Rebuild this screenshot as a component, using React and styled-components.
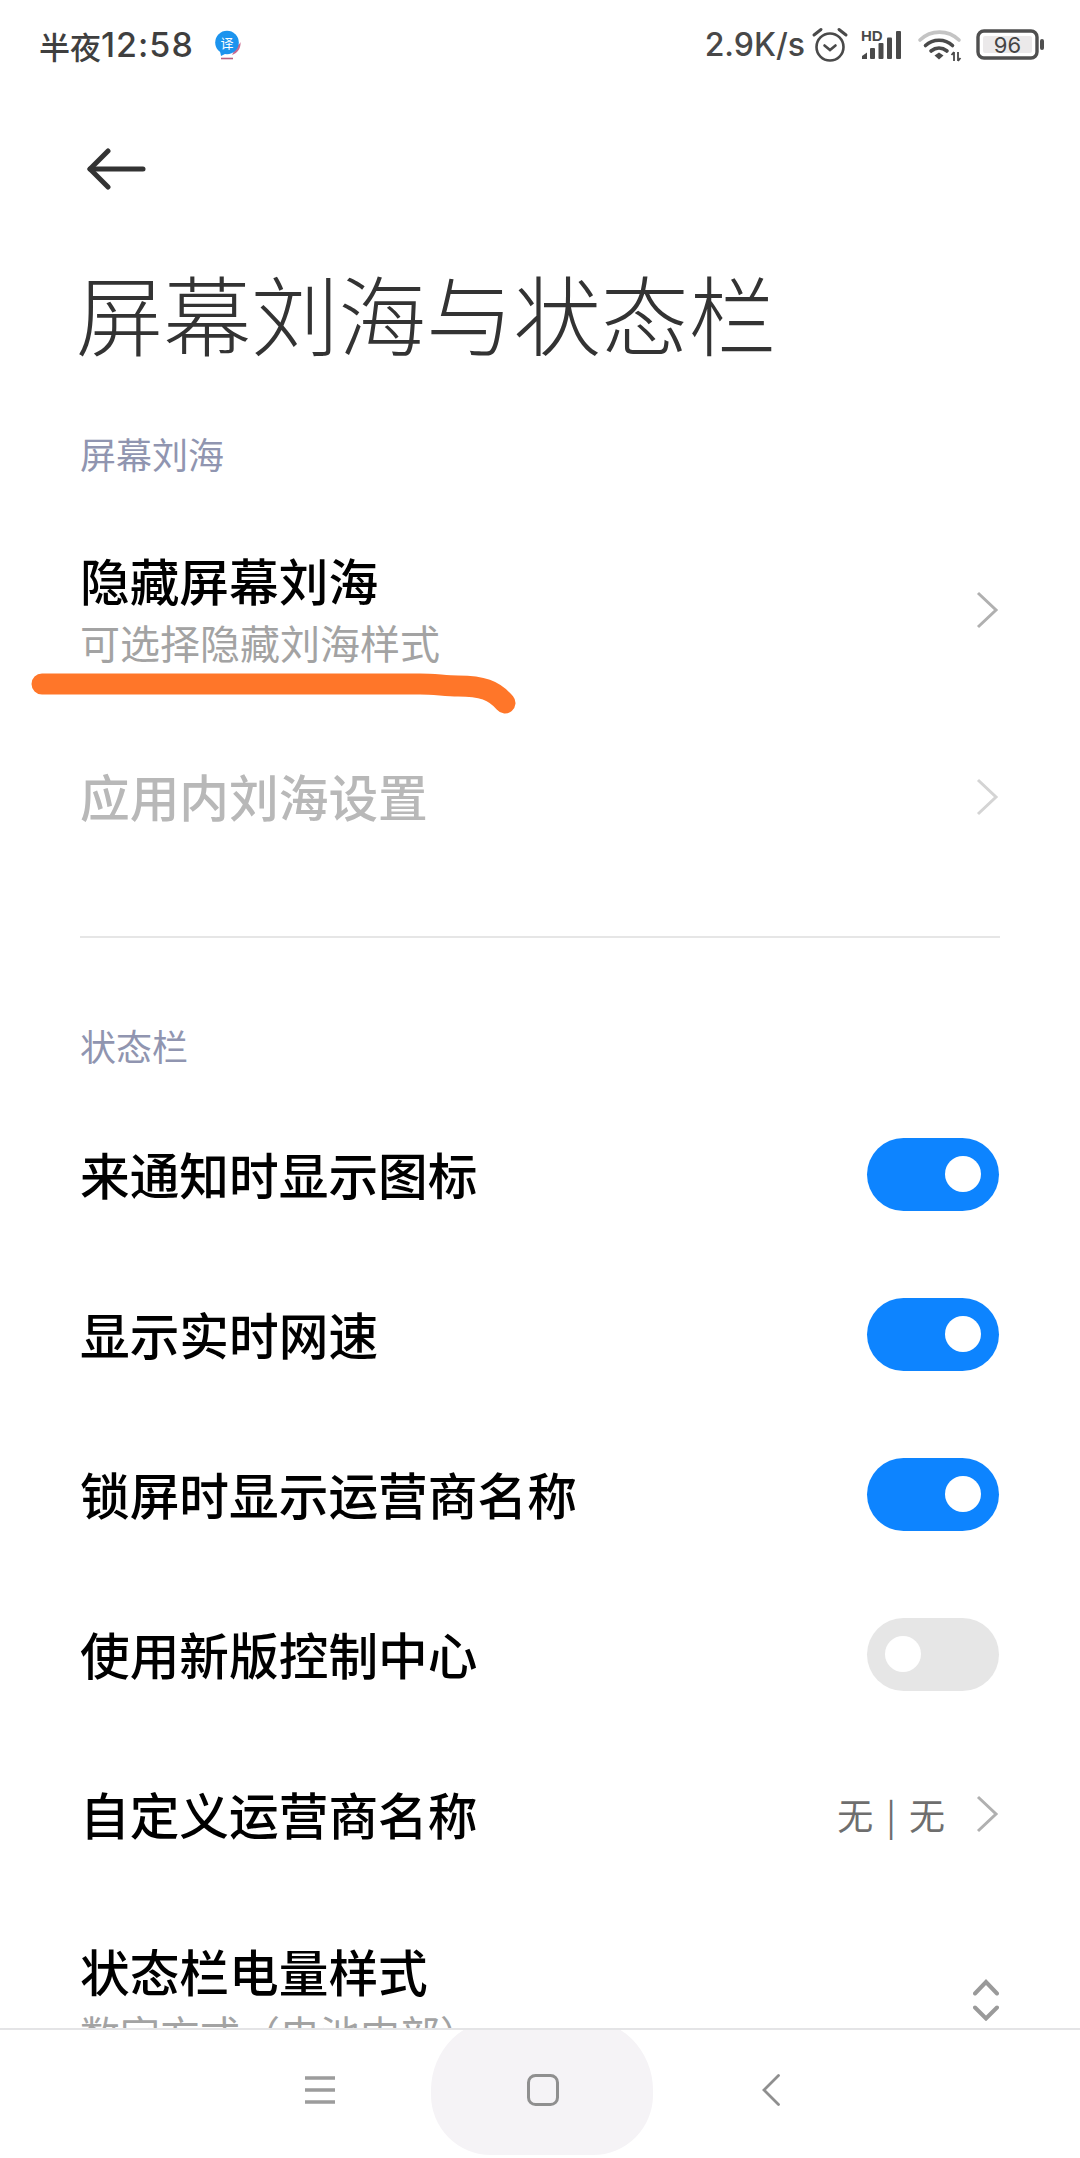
import React from "react";
import styled, { createGlobalStyle } from "styled-components";

const Global = createGlobalStyle`
  html, body { margin: 0; padding: 0; background: #fff; }
  * { box-sizing: border-box; }
  body { font-family: "Noto Sans CJK SC", "Noto Sans", sans-serif; }
`;

const Page = styled.div`
  position: relative;
  width: 1080px;
  height: 2158px;
  display: flex;
  flex-direction: column;
  background: #fff;
  overflow: hidden;
`;

const StatusBar = styled.div`
  flex: none;
  height: 90px;
  display: flex;
  align-items: center;
  padding: 0 36px 0 39px;
  color: #3f3f3f;
`;

const Clock = styled.span`
  font-family: "Noto Sans CJK SC", sans-serif;
  font-size: 31px;
  font-weight: 500;
  line-height: 1;
  display: flex;
  align-items: center;
`;

const ClockDigits = styled.span`
  font-family: "Inter", sans-serif;
  font-size: 34px;
  letter-spacing: 1px;
`;

const Spacer = styled.div`
  flex: 1;
`;

const Speed = styled.span`
  font-family: "Inter", "Roboto", sans-serif;
  font-size: 32px;
  font-weight: 500;
  line-height: 1;
  color: #484848;
`;

const StatusIcon = styled.svg`
  flex: none;
  overflow: visible;
  margin-left: ${(p) => p.$left || 0}px;
  margin-top: ${(p) => p.$top || 0}px;
`;

const Scroll = styled.div`
  flex: 1;
  min-height: 0;
  overflow: hidden;
`;

const Toolbar = styled.div`
  height: 155px;
  display: flex;
  align-items: center;
  padding-left: 87px;
  padding-top: 3px;
`;

const Title = styled.h1`
  margin: 0;
  height: 140px;
  padding-left: 76px;
  font-size: 87.5px;
  font-weight: 300;
  line-height: 134px;
  color: #333;
  white-space: nowrap;
`;

const SectionLabel = styled.div`
  margin-top: ${(p) => p.$top}px;
  height: 50px;
  padding-left: 80px;
  font-size: 36px;
  line-height: 48px;
  color: #9095b0;
`;

const Group = styled.div`
  margin-top: ${(p) => p.$top}px;
`;

const Row = styled.div`
  height: ${(p) => p.$h || 160}px;
  display: flex;
  align-items: center;
  justify-content: space-between;
  padding: 0 81px;
`;

const RowText = styled.div`
  display: flex;
  flex-direction: column;
  margin-bottom: 8px;
`;

const RowTitle = styled.div`
  font-size: 49.7px;
  line-height: 70px;
  padding-bottom: 3px;
  font-weight: 500;
  margin-left: -1px;
  color: ${(p) => (p.$off ? "#b8b8b8" : "#000")};
  white-space: nowrap;
`;

const RowSub = styled.div`
  font-size: 40px;
  line-height: 50px;
  margin-left: -1px;
  color: #a3a3a3;
  white-space: nowrap;
`;

const RowEnd = styled.div`
  display: flex;
  align-items: center;
  gap: 30px;
`;

const Value = styled.span`
  font-size: 36px;
  line-height: 1;
  word-spacing: 5px;
  color: #6e6e6e;
`;

const Divider = styled.div`
  margin: 46px 80px 0;
  height: 2px;
  background: #e6e6e6;
`;

const Track = styled.div`
  width: 132px;
  height: 73px;
  border-radius: 37px;
  display: flex;
  align-items: center;
  justify-content: ${(p) => (p.$on ? "flex-end" : "flex-start")};
  padding: 0 18px;
  background: ${(p) => (p.$on ? "#0d84ff" : "#e6e6e6")};
`;

const Knob = styled.div`
  width: 36px;
  height: 36px;
  border-radius: 50%;
  background: #fff;
`;

const NavBar = styled.div`
  flex: none;
  position: relative;
  height: 130px;
  background: #fff;
  border-top: 2px solid #e4e4e6;
  display: flex;
  align-items: center;
  justify-content: center;
  padding: 0 0 8px 15px;
  overflow: hidden;
`;

const NavHighlight = styled.div`
  position: absolute;
  left: 431px;
  top: -12px;
  width: 222px;
  height: 137px;
  border-radius: 72px 72px 60px 60px;
  background: #f5f3f6;
`;

const NavSlot = styled.div`
  position: relative;
  width: ${(p) => p.$w}px;
  display: flex;
  align-items: center;
  justify-content: center;
`;

const Scribble = styled.svg`
  position: absolute;
  left: 0;
  top: 660px;
  pointer-events: none;
`;

const Chevron = ({ color = "#b0b0b0" }) => (
  <svg width="24" height="38" viewBox="0 0 24 38" fill="none">
    <path d="M3 2 L21 19 L3 36" stroke={color} strokeWidth="3" />
  </svg>
);

const UpDown = () => (
  <svg width="26" height="42" viewBox="0 0 26 42" fill="none" stroke="#9a9a9a" strokeWidth="4" strokeLinecap="round">
    <path d="M2 14.5 L13 3 L24 14.5" />
    <path d="M2 28.5 L13 39.5 L24 28.5" />
  </svg>
);

const Toggle = ({ on }) => (
  <Track $on={on}>
    <Knob />
  </Track>
);

const BackArrow = () => (
  <svg width="60" height="42" viewBox="0 0 60 42" fill="none" stroke="#333" strokeWidth="5" strokeLinecap="round" strokeLinejoin="round">
    <path d="M3 21 H56" />
    <path d="M21 3 L3 21 L21 39" />
  </svg>
);

const TranslateIcon = () => (
  <StatusIcon width="28" height="32" viewBox="0 0 28 32" $left={20} $top={3}>
    <path d="M23 14 C25 14 26 12 26.5 11 C27 17 24 22 18 24 Z" fill="#c9698f" />
    <path d="M7 27.5 H19" stroke="#b8607f" strokeWidth="1.6" />
    <circle cx="13" cy="11.5" r="11.8" fill="#1c94ee" />
    <path d="M6 20 L7 25 L13 22 Z" fill="#1c94ee" />
    <text x="13" y="16.5" textAnchor="middle" fontSize="13" fill="#fff" fontFamily="Noto Sans CJK SC, sans-serif">译</text>
  </StatusIcon>
);

const AlarmIcon = () => (
  <StatusIcon width="36" height="36" viewBox="0 0 36 36" fill="none" stroke="#4a4a4a" strokeWidth="2.6" $left={7}>
    <circle cx="18" cy="20" r="13.5" />
    <path d="M12.5 18.5 L18 23 L23.5 18.5" strokeLinecap="round" />
    <path d="M2 8 L9 2.5 M34 8 L27 2.5" strokeWidth="3" strokeLinecap="round" />
  </StatusIcon>
);

const SignalIcon = () => (
  <StatusIcon width="42" height="30" viewBox="0 0 42 30" $left={13}>
    <text x="0" y="11" fontSize="15" fontWeight="700" fill="#4a4a4a" fontFamily="Liberation Sans, sans-serif">HD</text>
    <path d="M1 29 V26 L6 22.5 V29 Z" fill="#4a4a4a" />
    <rect x="9" y="18" width="5" height="11" rx="1" fill="#4a4a4a" />
    <rect x="17.5" y="13" width="5" height="16" rx="1" fill="#4a4a4a" />
    <rect x="26" y="7.5" width="5" height="21.5" rx="1" fill="#4a4a4a" />
    <rect x="35" y="1" width="5" height="28" rx="1" fill="#4a4a4a" />
  </StatusIcon>
);

const WifiIcon = () => (
  <StatusIcon width="44" height="34" viewBox="0 0 44 34" fill="none" $left={15}>
    <path d="M2 12 C13 1.5 30 1.5 41 12" stroke="#c4c4c4" strokeWidth="3.6" strokeLinecap="round" />
    <path d="M7.5 17.5 C15 10.5 27 10.5 34.5 17.5" stroke="#4a4a4a" strokeWidth="3.6" strokeLinecap="round" />
    <path d="M13 23 C18 19 24 19 29 23" stroke="#4a4a4a" strokeWidth="3.6" strokeLinecap="round" />
    <path d="M16.5 27.5 L21 24.5 L25.5 27.5 L21 31.5 Z" fill="#4a4a4a" />
    <path d="M36 24 V33 M33.5 27 L36 24 M40 24 V33 M40 33 L42.5 30" stroke="#4a4a4a" strokeWidth="1.8" />
  </StatusIcon>
);

const BatteryIcon = () => (
  <StatusIcon width="68" height="32" viewBox="0 0 68 32" $left={14}>
    <rect x="2" y="2" width="59" height="27" rx="6" fill="none" stroke="#4f4f4f" strokeWidth="3.4" />
    <rect x="7" y="7" width="49" height="17" rx="2" fill="#ebe9ea" />
    <rect x="64" y="10" width="4" height="11" rx="2" fill="#4f4f4f" />
    <text x="31.5" y="23.5" textAnchor="middle" fontSize="22" fill="#444" fontFamily="Inter, sans-serif">96</text>
  </StatusIcon>
);

const MenuIcon = () => (
  <svg width="30" height="28" viewBox="0 0 30 28" stroke="#9c9c9c" strokeWidth="3.4">
    <path d="M0 2 H30 M0 14 H30 M0 26 H30" />
  </svg>
);

const HomeIcon = () => (
  <svg width="32" height="32" viewBox="0 0 32 32" fill="none" stroke="#8f8f8f" strokeWidth="3">
    <rect x="1.5" y="1.5" width="29" height="29" rx="7" />
  </svg>
);

const BackIcon = () => (
  <svg width="18" height="32" viewBox="0 0 18 32" fill="none" stroke="#8f8f8f" strokeWidth="2.8" strokeLinecap="round">
    <path d="M16.5 1.5 L2 16 L16.5 30.5" />
  </svg>
);

export default function App() {
  return (
    <Page>
      <Global />
      <StatusBar>
        <Clock>
          半夜
          <ClockDigits>12:58</ClockDigits>
        </Clock>
        <TranslateIcon />
        <Spacer />
        <Speed>2.9K/s</Speed>
        <AlarmIcon />
        <SignalIcon />
        <WifiIcon />
        <BatteryIcon />
      </StatusBar>
      <Scroll>
        <Toolbar>
          <BackArrow />
        </Toolbar>
        <Title>屏幕刘海与状态栏</Title>
        <SectionLabel $top={44}>屏幕刘海</SectionLabel>
        <Group $top={37}>
          <Row $h={187}>
            <RowText>
              <RowTitle>隐藏屏幕刘海</RowTitle>
              <RowSub>可选择隐藏刘海样式</RowSub>
            </RowText>
            <Chevron />
          </Row>
          <Row $h={187}>
            <RowTitle $off>应用内刘海设置</RowTitle>
            <Chevron color="#d4d4d4" />
          </Row>
        </Group>
        <Divider />
        <SectionLabel $top={83}>状态栏</SectionLabel>
        <Group $top={23}>
          <Row>
            <RowTitle>来通知时显示图标</RowTitle>
            <Toggle on />
          </Row>
          <Row>
            <RowTitle>显示实时网速</RowTitle>
            <Toggle on />
          </Row>
          <Row>
            <RowTitle>锁屏时显示运营商名称</RowTitle>
            <Toggle on />
          </Row>
          <Row>
            <RowTitle>使用新版控制中心</RowTitle>
            <Toggle />
          </Row>
          <Row>
            <RowTitle>自定义运营商名称</RowTitle>
            <RowEnd>
              <Value>无 | 无</Value>
              <Chevron />
            </RowEnd>
          </Row>
          <Row $h={212}>
            <RowText>
              <RowTitle>状态栏电量样式</RowTitle>
              <RowSub>数字方式（电池内部）</RowSub>
            </RowText>
            <UpDown />
          </Row>
        </Group>
      </Scroll>
      <NavBar>
        <NavHighlight />
        <NavSlot $w={220}><MenuIcon /></NavSlot>
        <NavSlot $w={226}><HomeIcon /></NavSlot>
        <NavSlot $w={229}><BackIcon /></NavSlot>
      </NavBar>
      <Scribble width="540" height="70" viewBox="0 0 540 70" fill="none">
        <path
          d="M42 24 H420 C435 24 445 26 458 26 C482 26 494 30 505 43"
          stroke="#ff7629"
          strokeWidth="21"
          strokeLinecap="round"
          strokeLinejoin="round"
        />
      </Scribble>
    </Page>
  );
}
